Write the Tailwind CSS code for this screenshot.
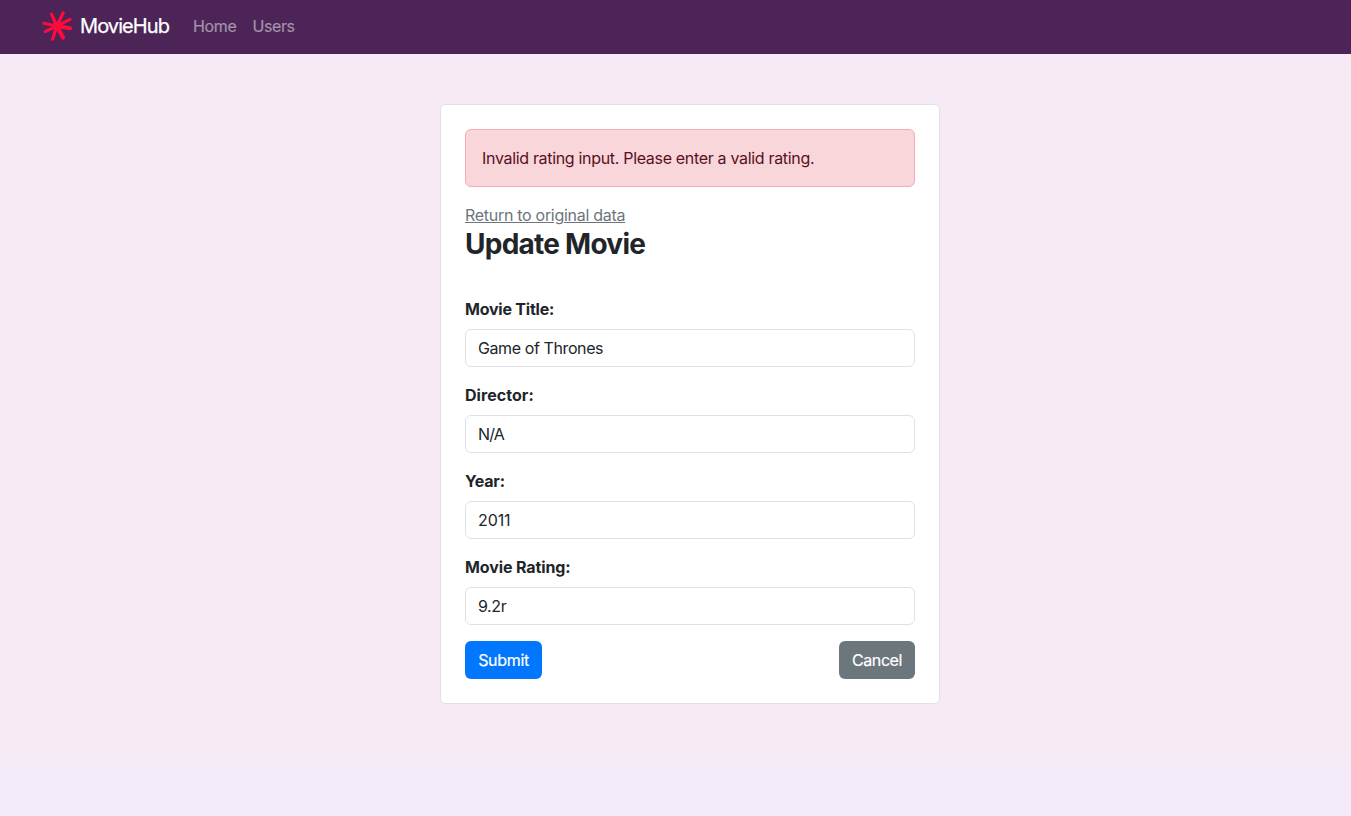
<!DOCTYPE html>
<html lang="en">
<head>
<meta charset="utf-8">
<title>MovieHub</title>
<script src="https://cdn.jsdelivr.net/npm/@tailwindcss/browser@4"></script>
</head>
<body class="flex h-screen flex-col overflow-hidden bg-[#f3ebf8] font-['Inter',sans-serif] text-base tracking-[-0.32px] text-[#212529]">
<nav class="flex h-[54px] shrink-0 items-center bg-[#4c2457] pb-[2px] pl-[42px]">
  <a class="flex w-[127px] items-center gap-2 text-xl tracking-[-0.92px] text-white">
    <svg class="size-[30px] shrink-0 overflow-visible" viewBox="0 0 30 30" fill="none" stroke="#ff0a3c" stroke-linecap="round">
      <path stroke-width="3.2" d="M14.8 15 21.2 1.8M14.8 15 28 8.4M14.8 15 9.5 3.2M14.8 15 3.2 20.6M14.8 15 10.6 28.2"/>
      <path stroke-width="4.2" d="M14.8 15 28 17.2M14.8 15 21 26.6"/>
      <path stroke-width="3" d="M14.8 15 1.8 12.2"/>
      <circle cx="14.8" cy="15" r="4.2" fill="#ff0a3c"/>
    </svg>
    <span class="[-webkit-text-stroke:0.25px_white]">MovieHub</span>
  </a>
  <a class="ml-6 tracking-[-0.35px] text-[#a591ab] [-webkit-text-stroke:0.2px_#a591ab]">Home</a>
  <a class="ml-4 tracking-[-0.4px] text-[#a591ab] [-webkit-text-stroke:0.2px_#a591ab]">Users</a>
</nav>
<main class="h-[709px] shrink-0 bg-[#f6eaf4] pl-[440px] pt-[50px]">
  <section class="h-[600px] w-[500px] rounded-[5px] border border-[#dee2e6] bg-white p-6">
    <div class="flex h-[58px] items-center rounded-md border border-[#f5aab5] bg-[#f9d6da] px-4 text-[#58101e]">Invalid rating input. Please enter a valid rating.</div>
    <a class="mt-4 block h-6 leading-6 tracking-[-0.29px] text-[#6c757d] underline">Return to original data</a>
    <h1 class="h-[34px] text-[28px] font-bold leading-[34px] tracking-[-0.75px]">Update Movie</h1>
    <form class="mt-9">
      <label class="block h-6 font-bold leading-6 tracking-[-0.22px]">Movie Title:</label>
      <div class="mt-2 flex h-[38px] items-center rounded-md border border-[#dee2e6] px-3 tracking-[-0.4px]">Game of Thrones</div>
      <label class="mt-4 block h-6 font-bold leading-6 tracking-[0.05px]">Director:</label>
      <div class="mt-2 flex h-[38px] items-center rounded-md border border-[#dee2e6] px-3 tracking-[-0.9px]">N/A</div>
      <label class="mt-4 block h-6 font-bold leading-6 tracking-[-0.2px]">Year:</label>
      <div class="mt-2 flex h-[38px] items-center rounded-md border border-[#dee2e6] px-3 tracking-[-0.1px]">2011</div>
      <label class="mt-4 block h-6 font-bold leading-6 tracking-[-0.12px]">Movie Rating:</label>
      <div class="mt-2 flex h-[38px] items-center rounded-md border border-[#dee2e6] px-3 tracking-[-0.4px]">9.2r</div>
      <div class="mt-4 flex justify-between text-white">
        <button type="button" class="h-[38px] w-[77px] rounded-md bg-[#0077fe] [-webkit-text-stroke:0.2px_white]">Submit</button>
        <button type="button" class="h-[38px] w-[76px] rounded-md bg-[#6c777d] tracking-[-0.42px] [-webkit-text-stroke:0.2px_white]">Cancel</button>
      </div>
    </form>
  </section>
</main>
</body>
</html>
